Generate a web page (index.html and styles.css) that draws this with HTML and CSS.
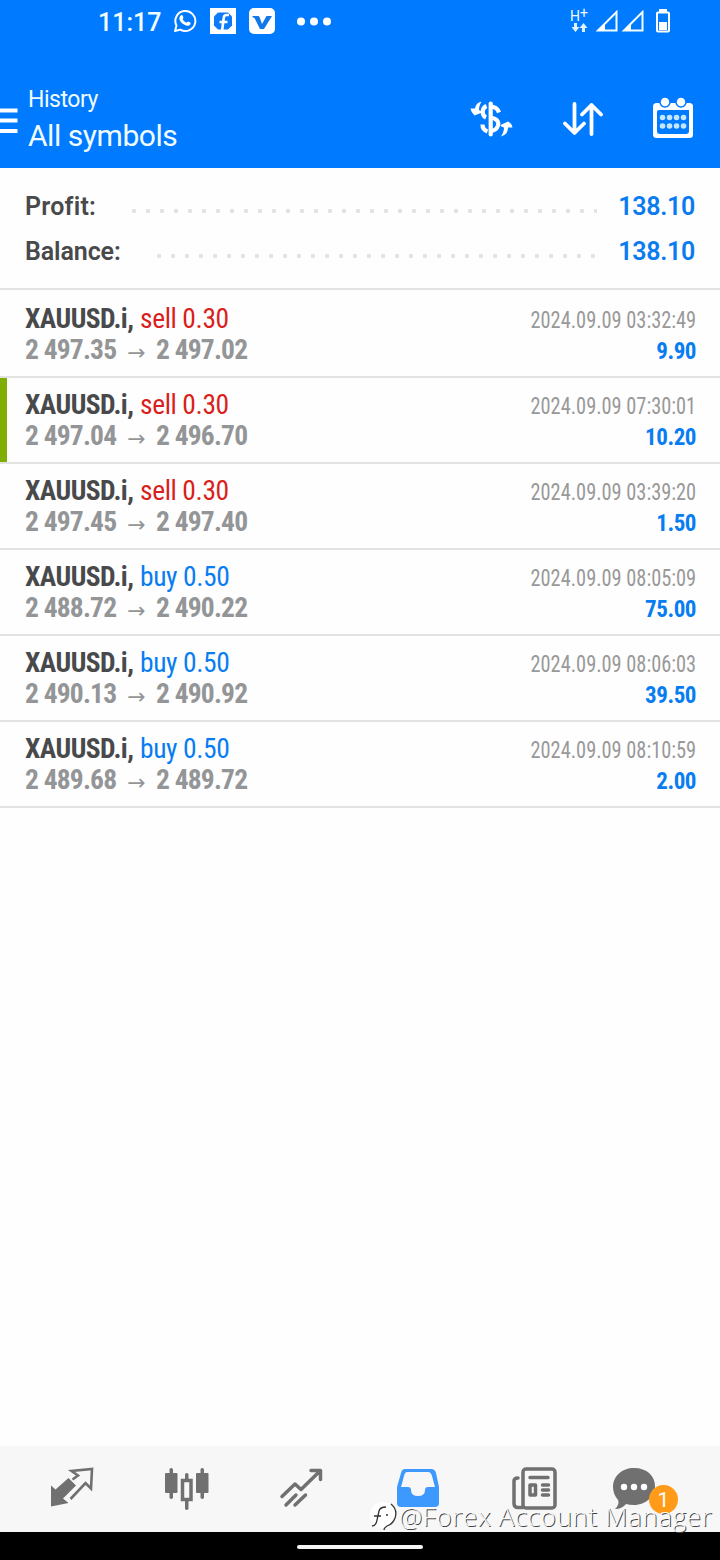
FILE: index.html
```html
<!DOCTYPE html>
<html lang="en">
<head>
<meta charset="utf-8">
<title>History</title>
<link rel="stylesheet" href="styles.css">
</head>
<body>
<div class="app">
  <header class="header">
    <div class="status">
      <span class="clock">11:17</span>
      <svg class="whatsapp" width="24" height="24" viewBox="0 0 24 24"><path d="M2 22l1.500-5.400A10 10 0 1 1 7.300 20.600Z" fill="none" stroke="#fff" stroke-width="2" stroke-linejoin="round"/><path d="M8.200 6.300c.6-.4 1.100-.3 1.400.3l.8 1.900c.2.6-.5 1.200-.8 1.600.8 1.700 2.200 3 4 3.700.5-.5 1-1.400 1.600-1.200l2 1c.6.4.4 1.300 0 1.900-.9 1.300-2.500 1.500-4 1-3.200-1-5.800-3.300-6.700-6-.5-1.600.2-3.300 1.700-4.200Z" fill="#fff"/></svg>
      <svg class="facebook" width="26" height="26" viewBox="0 0 26 26"><path d="M0 0H26V26H0Z" fill="#fff"/><path d="M8 4.500h10l4 4v9l-4 4H8l-4-4v-9Z" fill="#0b7bfa"/><path d="M19 7h-2.500q-2.500 0-2.800 3L12 23.500M9.500 14h8" fill="none" stroke="#fff" stroke-width="2.600"/></svg>
      <svg class="vapp" width="26" height="26" viewBox="0 0 26 26"><rect width="26" height="26" rx="5" fill="#fff"/><path d="M3.500 8h6l1 1 2.500 7 4.500-8H23l-8 13h-4L5.500 10l-2-.8Z" fill="#1277ea"/></svg>
      <svg class="dots" width="34" height="9" viewBox="0 0 34 9"><g fill="#fff"><circle cx="4" cy="4.500" r="4"/><circle cx="17" cy="4.500" r="4"/><circle cx="30" cy="4.500" r="4"/></g></svg>
      <div class="network"><span>H<sup>+</sup></span>
        <svg width="18" height="10" viewBox="0 0 18 10"><path d="M4 0h3v4h2.500l-4 5-4-5H4zM12 9h3V5h2.500l-4-5-4 5H12z" fill="#dff2ff"/></svg>
      </div>
      <svg class="signal" width="48" height="22" viewBox="0 0 48 22"><path d="M2 20.500 20.500 2v18.500ZM28 20.500 46.500 2v18.500Z" fill="none" stroke="#f3ffff" stroke-width="2"/><path d="M1 21 9 13v8ZM27 21l8-8v8Z" fill="#fff"/></svg>
      <svg class="battery" width="14" height="24" viewBox="0 0 14 24"><path d="M3 0h8v3H3z" fill="#fff"/><rect x="1" y="3.500" width="12" height="19" rx="1" fill="none" stroke="#fff" stroke-width="2"/><path d="M3 13h8v8H3z" fill="#fff"/></svg>
    </div>
    <div class="toolbar">
      <svg class="menu" width="18" height="26" viewBox="0 0 18 26"><path d="M0 2.500h17.500M0 12.500h17.500M0 23h17.500" stroke="#fff" stroke-width="4"/></svg>
      <div class="titles"><div class="title">History</div><div class="subtitle">All symbols</div></div>
      <svg class="currency" width="44" height="38" viewBox="0 0 44 38"><path d="M29 12.500C27.500 8 25 6.500 20 6.500M16.500 6c-5 2-5 9.500-.5 11.500M20 17.500c7 1 9 4 8 8-1 3.500-4 5.500-8 5.500M12.500 24.500c0 4 2 6 5 7" fill="none" stroke="#fff" stroke-width="4.200"/><path d="M20.700 3.500v31" stroke="#fff" stroke-width="4.200" stroke-linecap="round"/><path d="M11.500 1.500C7.500 2.500 5.500 5 5 8.500H.5Q1 12.500 4.500 15.500L12 12.500Q12 11 9 10C9 6.500 10 4 11.500 1.500ZM31 36.500c5-1.500 7-4.500 7-9h4.500Q42 23.500 38 21.500L30.500 25q0 1.500 3.500 2.500c0 3-1 6-3 9Z" fill="#fff"/></svg>
      <svg class="sort" width="40" height="34" viewBox="0 0 40 34"><path d="M11.500 2v28M2 21.500l9.500 9.500 9.500-9.500M28.500 32V3M19 12.500 28.500 3 38 12.500" fill="none" stroke="#fff" stroke-width="3.800" stroke-linecap="round" stroke-linejoin="round"/></svg>
      <svg class="calendar" width="42" height="42" viewBox="0 0 42 42"><rect x="1" y="6" width="40" height="35" rx="3.500" fill="#fff"/><path d="M6 13h31v21q0 3-3 3H8q-3 0-3-3V15q0-2 2-2Z" fill="#007aff"/><g fill="#fff" stroke="#007aff" stroke-width="1.500"><circle cx="13" cy="5" r="5"/><circle cx="29" cy="5" r="5"/></g><path d="M10.500 20.500h.1m6.900 0h.1m6.900 0h.1m6.900 0h.1M10.500 29h.1m6.900 0h.1m6.900 0h.1m6.900 0h.1" stroke="#c5e6ff" stroke-width="5.500" stroke-linecap="round"/></svg>
    </div>
  </header>
  <section class="summary">
    <div class="total"><span class="label wide">Profit:</span><span class="leader profit"></span><span class="amount">138.10</span></div>
    <div class="total"><span class="label">Balance:</span><span class="leader balance"></span><span class="amount">138.10</span></div>
  </section>
  <main class="deals">
    <article class="deal"><div class="line"><b class="sym">XAUUSD.i,</b><span class="side sell">sell 0.30</span><time>2024.09.09 03:32:49</time></div><div class="line"><span class="price">2 497.35</span><i class="to">→</i><span class="price">2 497.02</span><span class="gain">9.90</span></div></article>
    <article class="deal marked"><div class="line"><b class="sym">XAUUSD.i,</b><span class="side sell">sell 0.30</span><time>2024.09.09 07:30:01</time></div><div class="line"><span class="price">2 497.04</span><i class="to">→</i><span class="price">2 496.70</span><span class="gain">10.20</span></div></article>
    <article class="deal"><div class="line"><b class="sym">XAUUSD.i,</b><span class="side sell">sell 0.30</span><time>2024.09.09 03:39:20</time></div><div class="line"><span class="price">2 497.45</span><i class="to">→</i><span class="price">2 497.40</span><span class="gain">1.50</span></div></article>
    <article class="deal"><div class="line"><b class="sym">XAUUSD.i,</b><span class="side buy">buy 0.50</span><time>2024.09.09 08:05:09</time></div><div class="line"><span class="price">2 488.72</span><i class="to">→</i><span class="price">2 490.22</span><span class="gain">75.00</span></div></article>
    <article class="deal"><div class="line"><b class="sym">XAUUSD.i,</b><span class="side buy">buy 0.50</span><time>2024.09.09 08:06:03</time></div><div class="line"><span class="price">2 490.13</span><i class="to">→</i><span class="price">2 490.92</span><span class="gain">39.50</span></div></article>
    <article class="deal"><div class="line"><b class="sym">XAUUSD.i,</b><span class="side buy">buy 0.50</span><time>2024.09.09 08:10:59</time></div><div class="line"><span class="price">2 489.68</span><i class="to">→</i><span class="price">2 489.72</span><span class="gain">2.00</span></div></article>
  </main>
  <nav class="tabs">
    <svg width="46" height="42" viewBox="0 0 46 42"><path d="M2 18.500 6.500 22.500 19.500 11l7.500 7.500L14 31.500l5.500 4.500L2 39.500Z" fill="#707070"/><path d="M23.500 12.500 29 8.500 22.500 4 43 2l-1 19.500-5.500-5.500L21.500 32" fill="none" stroke="#707070" stroke-width="2.600"/></svg>
    <svg width="46" height="44" viewBox="0 0 46 44"><g fill="#707070"><rect x="1" y="6" width="12.500" height="20" rx="1"/><rect x="5.500" y="1" width="3.500" height="31" rx="1.700"/><rect x="32" y="6" width="12.500" height="20" rx="1"/><rect x="36.500" y="1" width="3.500" height="31" rx="1.700"/><rect x="21" y="6" width="3.500" height="37" rx="1.700"/></g><rect x="18.500" y="13.500" width="8.500" height="19" fill="#f7f7f7" stroke="#707070" stroke-width="3.500"/></svg>
    <svg width="44" height="42" viewBox="0 0 44 42"><path d="m3 29.500 13-12.500 6 5.500L41 4M32 3.500h9.500v9M7 38l10-10M16 38l10.500-10" fill="none" stroke="#707070" stroke-width="3.500" stroke-linecap="round" stroke-linejoin="round"/></svg>
    <svg width="44" height="42" viewBox="0 0 44 42"><path d="M9 2h26q4 0 5 4l3 14v16q0 4-4 4H5q-4 0-4-4V20L5 6q1-4 4-4Z" fill="#3d99fd"/><path d="M11 5h21q3 0 4 4l3 11H32q-3 0-3 3 0 6-7 6t-7-6q0-3-3-3H5L8 9q1-4 3-4Z" fill="#f7f7f7"/></svg>
    <svg width="46" height="44" viewBox="0 0 46 44"><g fill="none" stroke="#707070" stroke-width="3.500" stroke-linecap="round" stroke-linejoin="round"><rect x="11" y="2" width="32" height="39" rx="3"/><path d="M11 40.500H6q-4 0-4-4V14q0-3 4-3M18 10.500h18M30.500 18h6M30.500 23h6M30.500 28h6"/><rect x="18" y="18" width="5.500" height="10"/></g></svg>
    <div class="chat">
      <svg width="44" height="44" viewBox="0 0 44 44"><path d="M22 1c13 0 21 8 21 18S34 38 22 38q-5 0-8-1-4 5-11 5 5-5 3-9Q1 27 1 20C1 9 10 1 22 1Z" fill="#707070"/><g fill="#fff"><circle cx="12" cy="20" r="3.200"/><circle cx="22" cy="20" r="3.200"/><circle cx="32" cy="20" r="3.200"/></g></svg>
      <span class="badge">1</span>
    </div>
  </nav>
  <div class="homebar"><span></span></div>
  <div class="credit"><svg width="30" height="30" viewBox="0 0 30 30"><circle cx="14" cy="14" r="13" fill="#fff"/><path d="M3 25q4 0 5-6l2-9q1-4 7-4M5 15h7M22 3q7 6 4 14-2 6-8 8-3 2-3 4" fill="none" stroke="#333" stroke-width="1.300"/><circle cx="18" cy="14" r="1" fill="#333"/></svg><span>@Forex Account Manager</span></div>
</div>
</body>
</html>
```
FILE: styles.css
```css
* { box-sizing: border-box; }
body { margin: 0; background: #fefefe; font-family: Roboto, "Liberation Sans", sans-serif; }
svg { display: block; flex: none; }
.app { position: relative; width: 720px; height: 1560px; display: flex; flex-direction: column; overflow: hidden; }
.header { height: 168px; flex: none; background: #007aff; color: #f0fcff; }
.status { height: 42px; display: flex; align-items: center; padding-left: 98px; }
.clock { width: 75px; padding-top: 3px; font-size: 25px; line-height: 42px; font-weight: 500; letter-spacing: 0; }
.facebook { margin-left: 13px; }
.vapp { margin-left: 13px; }
.dots { margin-left: 22px; }
.network { margin-left: 239px; width: 20px; height: 24px; font-size: 14px; line-height: 14px; }
.network span { display: block; height: 14px; }
.network sup { font-size: 14px; line-height: 0; vertical-align: 3px; }
.signal { margin-left: 6px; }
.battery { margin-left: 12px; }
.toolbar { height: 126px; display: flex; align-items: center; }
.menu { margin-top: 32px; }
.titles { width: 443px; padding-left: 10px; padding-top: 29px; }
.title { font-size: 23px; line-height: 32px; letter-spacing: -.45px; padding-top: 1px; }
.subtitle { font-size: 30px; line-height: 40px; letter-spacing: -.45px; }
.currency { margin: 27px 0 0 9px; }
.sort { margin: 27px 0 0 49px; }
.calendar { margin: 26px 0 0 49px; }
.summary { height: 122px; flex: none; padding: 16px 25px 0; border-bottom: 2px solid #e3e3e3; }
.total { display: flex; height: 45px; align-items: center; font-size: 25px; font-weight: 600; color: #48494b; }
.label { letter-spacing: -.1px; white-space: nowrap; }
.wide { letter-spacing: .25px; }
.leader { height: 4px; margin: 8px 0 0 auto; background: radial-gradient(circle at 2px 2px, #e3e3e3 2px, transparent 2.500px) 0 0 / 14px 4px; }
.profit { width: 465px; }
.balance { width: 440px; }
.amount { width: 98px; text-align: right; color: #0b7bf0; letter-spacing: -.3px; }
.deals { flex: 1; }
.deal { position: relative; height: 86px; padding: 11px 24px 0 25px; border-bottom: 2px solid #e3e3e3; }
.deal:first-child { height: 88px; padding-top: 13px; }
.marked::before { content: ""; position: absolute; left: 0; top: 0; width: 7px; height: 84px; background: #80ae00; }
.line { display: flex; height: 31px; line-height: 31px; white-space: nowrap; font-family: "Roboto Condensed", Roboto, sans-serif; font-stretch: 75%; font-size: 27.500px; }
.sym { width: 115px; color: #48494b; letter-spacing: -.55px; }
.side { letter-spacing: -.4px; }
.sell { color: #d91f20; }
.buy { color: #087df2; }
time { margin-left: auto; padding-top: 2px; font-size: 23px; transform: scaleX(.885); transform-origin: 100% 50%; color: #999; }
.price { width: 92px; font-weight: 700; letter-spacing: -.8px; color: #939597; }
.to { width: 39px; text-align: center; font: normal 22px/37px "DejaVu Sans", sans-serif; color: #939597; }
.gain { margin-left: auto; padding-top: 2px; font-size: 23px; font-weight: 700; letter-spacing: -.45px; color: #087df2; }
.tabs { height: 86px; flex: none; background: #f7f7f7; display: flex; align-items: flex-start; padding: 21px 0 0 49px; gap: 70px; }
.tabs > :nth-child(2) { margin-left: -1px; }
.tabs > :nth-child(3) { margin-left: -1px; }
.tabs > :nth-child(4) { margin-left: 3px; }
.tabs > :nth-child(5) { margin-left: 2px; }
.tabs > .chat { position: relative; margin-left: -16px; }
.badge { position: absolute; left: 37px; top: 18px; width: 29px; height: 29px; border-radius: 50%; background: #ff9b18; color: #fff; text-align: center; font-size: 21px; line-height: 30px; }
.homebar { height: 28px; flex: none; background: #000; padding: 13px 297px; }
.homebar span { display: block; height: 4px; border-radius: 2px; background: #f4f4f4; }
.credit { position: absolute; left: 369px; top: 1500px; height: 32px; display: flex; align-items: center; color: #fafafa; font: 300 26px/32px "Open Sans", sans-serif; letter-spacing: .58px; text-shadow: 1px 1px 0 #444; white-space: nowrap; }
```
